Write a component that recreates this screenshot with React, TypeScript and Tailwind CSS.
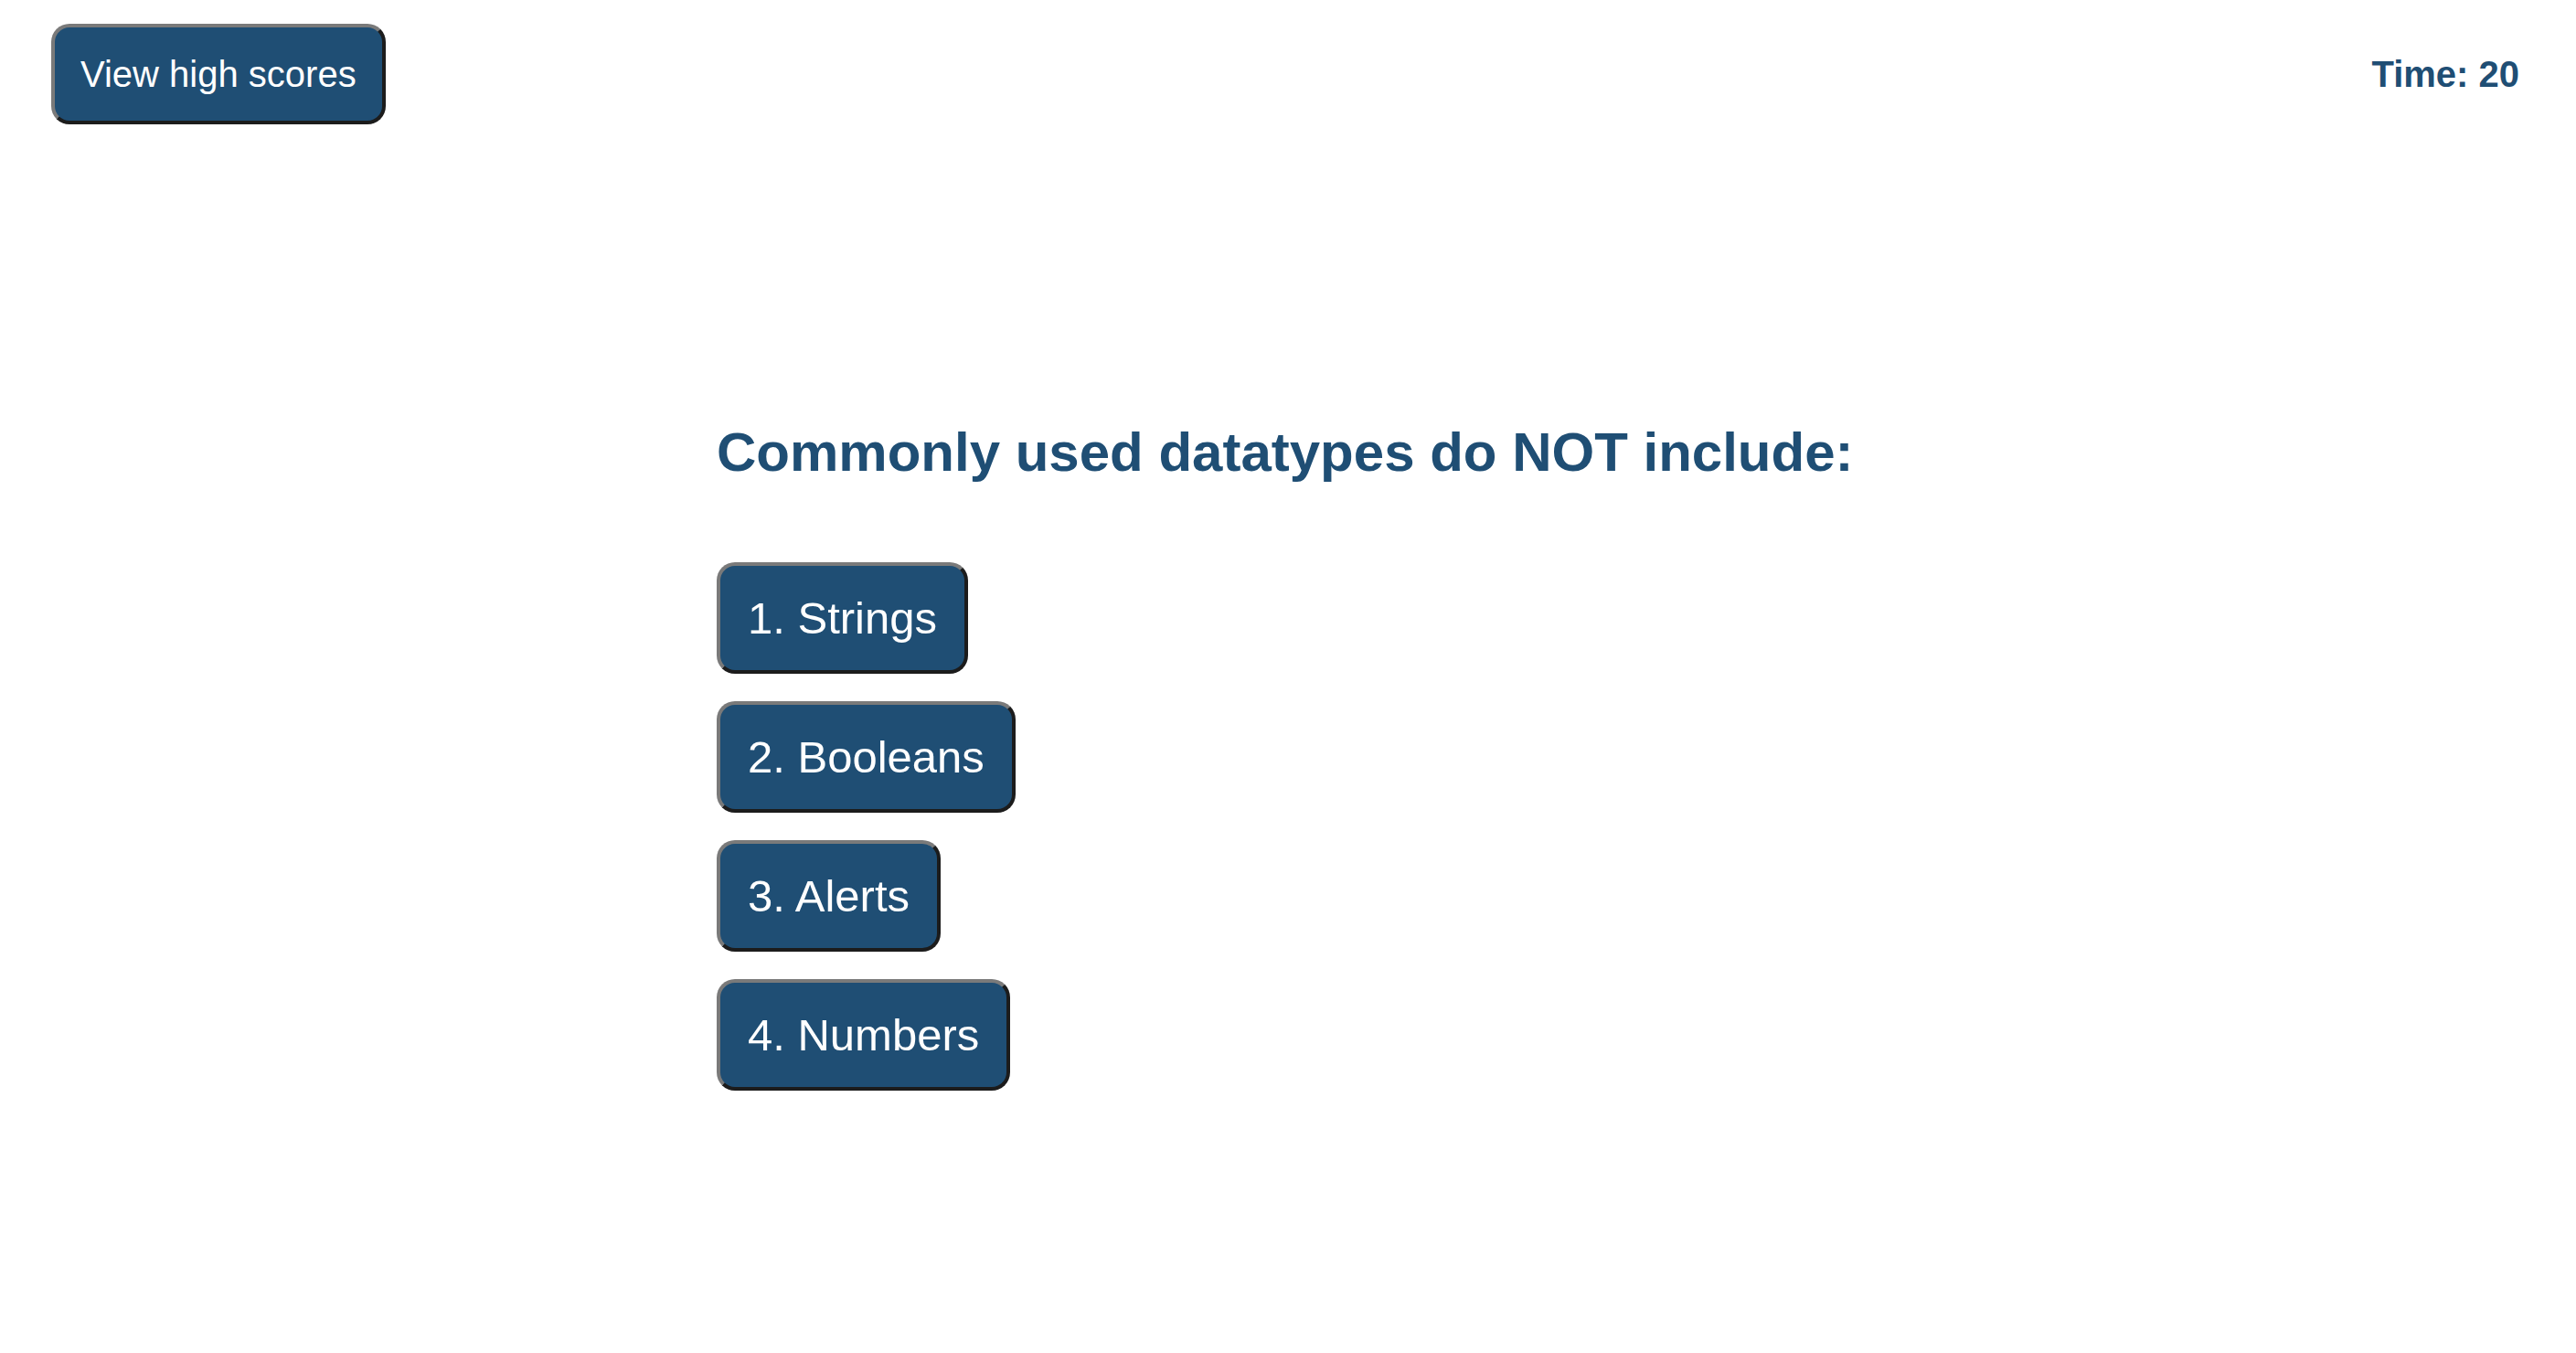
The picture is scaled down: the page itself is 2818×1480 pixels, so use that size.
const answers = ["1. Strings", "2. Booleans", "3. Alerts", "4. Numbers"];

const btn =
  "rounded-[20px] border-4 border-t-[#7a7a7a] border-l-[#7a7a7a] border-r-[#1c1c1c] border-b-[#1c1c1c] bg-[#1f4e74] text-white";

export default function App() {
  return (
    <div className="min-h-screen bg-white font-['Liberation_Sans',Arial,sans-serif] text-[#1f4e74]">
      <header className="flex items-start justify-between pl-[56px] pr-[62px] pt-[26px]">
        <button className={`${btn} px-[28px] py-[28px] text-[40px] leading-[46px]`}>
          View high scores
        </button>
        <div className="mt-[32px] text-[40px] font-bold leading-[46px]">Time: 20</div>
      </header>

      <main className="mx-auto w-[1250px]">
        <h2 className="mt-[324px] text-[60px] font-bold leading-[69px]">
          Commonly used datatypes do NOT include:
        </h2>
        <div className="mt-[86px] flex flex-col items-start gap-[30px]">
          {answers.map((a) => (
            <button key={a} className={`${btn} px-[30px] py-[29px] text-[49px] leading-[56px]`}>
              {a}
            </button>
          ))}
        </div>
      </main>
    </div>
  );
}
